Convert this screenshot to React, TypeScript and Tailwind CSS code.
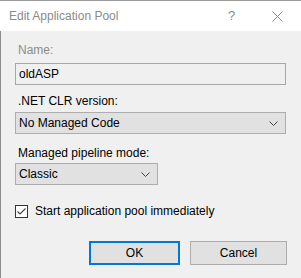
import React from "react";

const font = { fontFamily: '"Liberation Sans", "Noto Sans", sans-serif' };

function Chevron() {
  return (
    <svg width="9" height="5" viewBox="0 0 9 5" className="shrink-0">
      <path d="M0.5 0.5 L4.5 4.5 L8.5 0.5" fill="none" stroke="#444" strokeWidth="1" />
    </svg>
  );
}

export default function App() {
  return (
    <div className="w-[301px] h-[278px] flex flex-col overflow-hidden text-[12px] leading-[16px] text-black" style={font}>
      <div className="h-[31px] shrink-0 bg-white border-t border-[#9a9a9a] flex items-center pl-[9px]">
        <span className="text-[#8a8a8a] text-[12px]">Edit Application Pool</span>
        <span className="ml-auto text-[#8a8a8a] text-[13px] w-[8px] mr-[36px]">?</span>
        <svg width="11" height="11" viewBox="0 0 11 11" className="mr-[18px]">
          <path d="M0.5 0.5 L10.5 10.5 M10.5 0.5 L0.5 10.5" stroke="#8a8a8a" strokeWidth="1" />
        </svg>
      </div>
      <div className="flex-1 bg-[#f0f0f0] border-l border-[#8c8c8c] pl-[14px] pr-[14px] flex flex-col">
        <div className="mt-[11px] text-[#8d8d8d] pl-[3px]">Name:</div>
        <div className="mt-[5px] h-[22px] w-[271px] border border-[#a8a8a8] bg-[#f0f0f0] flex items-center pl-[3px]">oldASP</div>
        <div className="mt-[8px] pl-[3px]">.NET CLR version:</div>
        <div className="mt-[3px] h-[22px] w-[271px] border border-[#adadad] bg-[#e1e1e1] flex items-center pl-[3px] pr-[7px]">
          <span>No Managed Code</span>
          <span className="ml-auto"><Chevron /></span>
        </div>
        <div className="mt-[11px] pl-[3px]">Managed pipeline mode:</div>
        <div className="mt-[2px] h-[22px] w-[143px] border border-[#adadad] bg-[#e1e1e1] flex items-center pl-[3px] pr-[7px]">
          <span>Classic</span>
          <span className="ml-auto"><Chevron /></span>
        </div>
        <div className="mt-[18px] flex items-center gap-[7px]">
          <div className="w-[13px] h-[13px] border border-[#333] bg-white flex items-center justify-center">
            <svg width="11" height="11" viewBox="0 0 11 11">
              <path d="M1.5 5.5 L4 8 L9.5 2.5" fill="none" stroke="#444" strokeWidth="1.1" />
            </svg>
          </div>
          <span>Start application pool immediately</span>
        </div>
        <div className="mt-[22px] flex justify-end gap-[10px]">
          <div className="w-[91px] h-[24px] border-2 border-[#0078d7] bg-[#e1e1e1] flex items-center justify-center">OK</div>
          <div className="w-[97px] h-[24px] border border-[#adadad] bg-[#e1e1e1] flex items-center justify-center">Cancel</div>
        </div>
      </div>
    </div>
  );
}
